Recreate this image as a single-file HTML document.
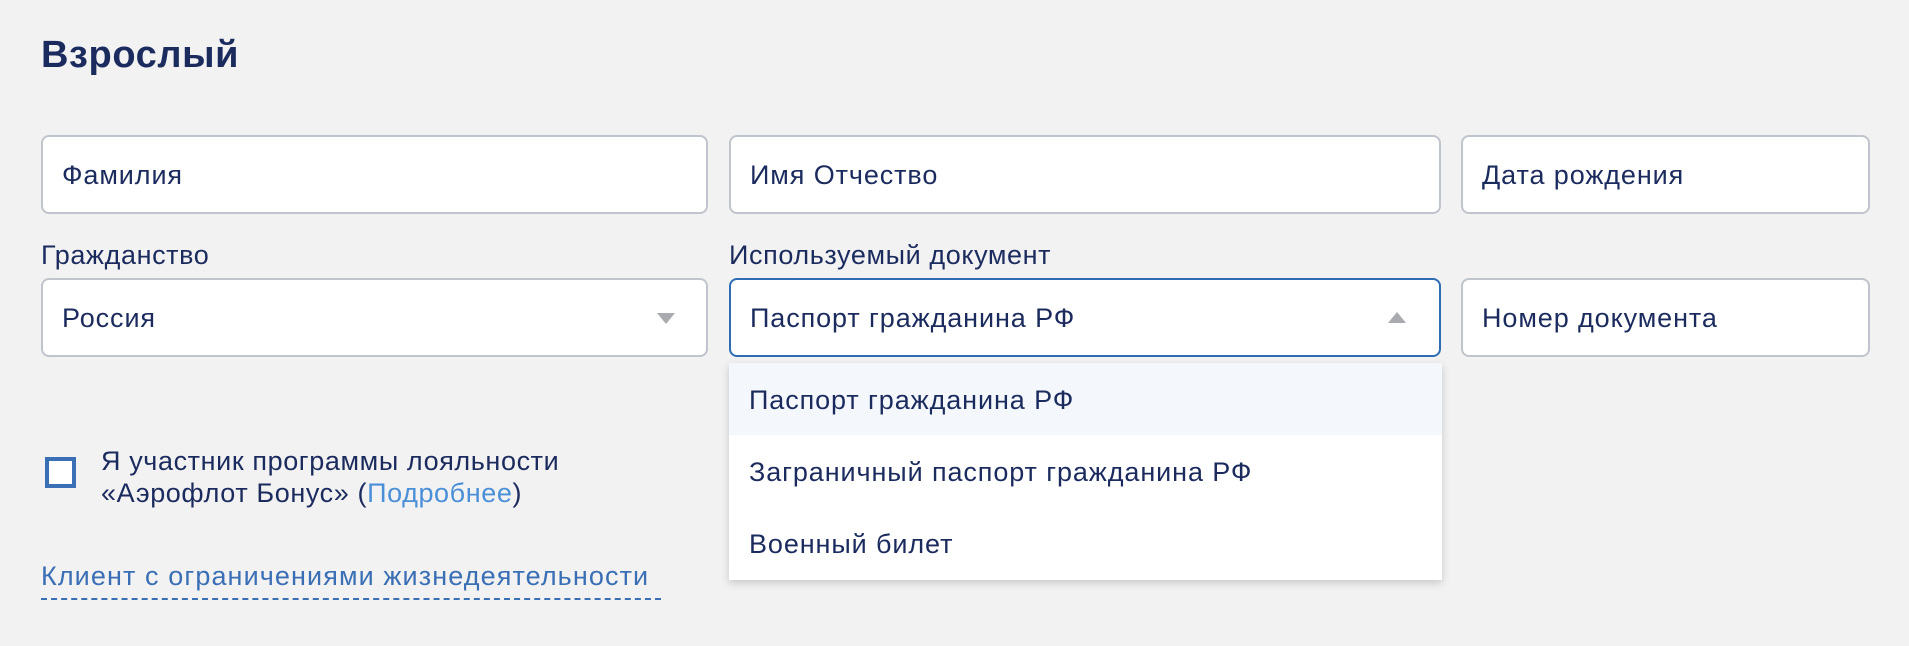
<!DOCTYPE html>
<html><head><meta charset="utf-8"><style>
*{box-sizing:border-box;margin:0;padding:0}
body{width:1909px;height:646px;background:#f2f2f2;font-family:"Liberation Sans",sans-serif;color:#1b2b5e;position:relative;overflow:hidden}
.a{position:absolute}
.t{left:41px;top:34px;font-size:38px;font-weight:bold;letter-spacing:0.6px}
.in{position:absolute;background:#fff;border:2px solid #c0c4cc;border-radius:8px;height:79px;font-size:27px;letter-spacing:0.9px;padding-left:19px;line-height:77px}
.lbl{font-size:27px;letter-spacing:0.6px}
.tri{position:absolute;width:0;height:0;border-left:9px solid transparent;border-right:9px solid transparent}
.dd{left:729px;top:363px;width:713px;height:217px;background:#fff;box-shadow:0 3px 8px rgba(0,0,0,.18)}
.it{height:72px;line-height:74px;padding-left:20px;font-size:27px;letter-spacing:0.9px}
</style></head><body>
<div class="a t">Взрослый</div>
<div class="in" style="left:41px;top:135px;width:667px">Фамилия</div>
<div class="in" style="left:729px;top:135px;width:712px">Имя Отчество</div>
<div class="in" style="left:1461px;top:135px;width:409px">Дата рождения</div>
<div class="a lbl" style="left:41px;top:240px">Гражданство</div>
<div class="a lbl" style="left:729px;top:240px">Используемый документ</div>
<div class="in" style="left:41px;top:278px;width:667px">Россия<div class="tri" style="left:614px;top:33px;border-top:11px solid #a9abb0"></div></div>
<div class="in" style="left:729px;top:278px;width:712px;border-color:#2e6db4">Паспорт гражданина РФ<div class="tri" style="left:657px;top:32px;border-bottom:11px solid #a9abb0"></div></div>
<div class="in" style="left:1461px;top:278px;width:409px">Номер документа</div>
<div class="a dd">
<div class="it" style="background:#f4f7fb">Паспорт гражданина РФ</div>
<div class="it">Заграничный паспорт гражданина РФ</div>
<div class="it">Военный билет</div>
</div>
<div class="a" style="left:45px;top:457px;width:31px;height:31px;border:4px solid #3a6fb6;background:#fff"></div>
<div class="a" style="left:101px;top:445px;font-size:27px;line-height:32px;letter-spacing:0.6px">Я участник программы лояльности<br>«Аэрофлот Бонус» (<span style="color:#4a8fd8">Подробнее</span>)</div>
<div class="a" style="left:41px;top:561px;font-size:27px;letter-spacing:1.1px;color:#3b6fb5;padding-bottom:6px;border-bottom:2px dashed #3b6fb5;width:620px;white-space:nowrap">Клиент с ограничениями жизнедеятельности</div>
</body></html>
